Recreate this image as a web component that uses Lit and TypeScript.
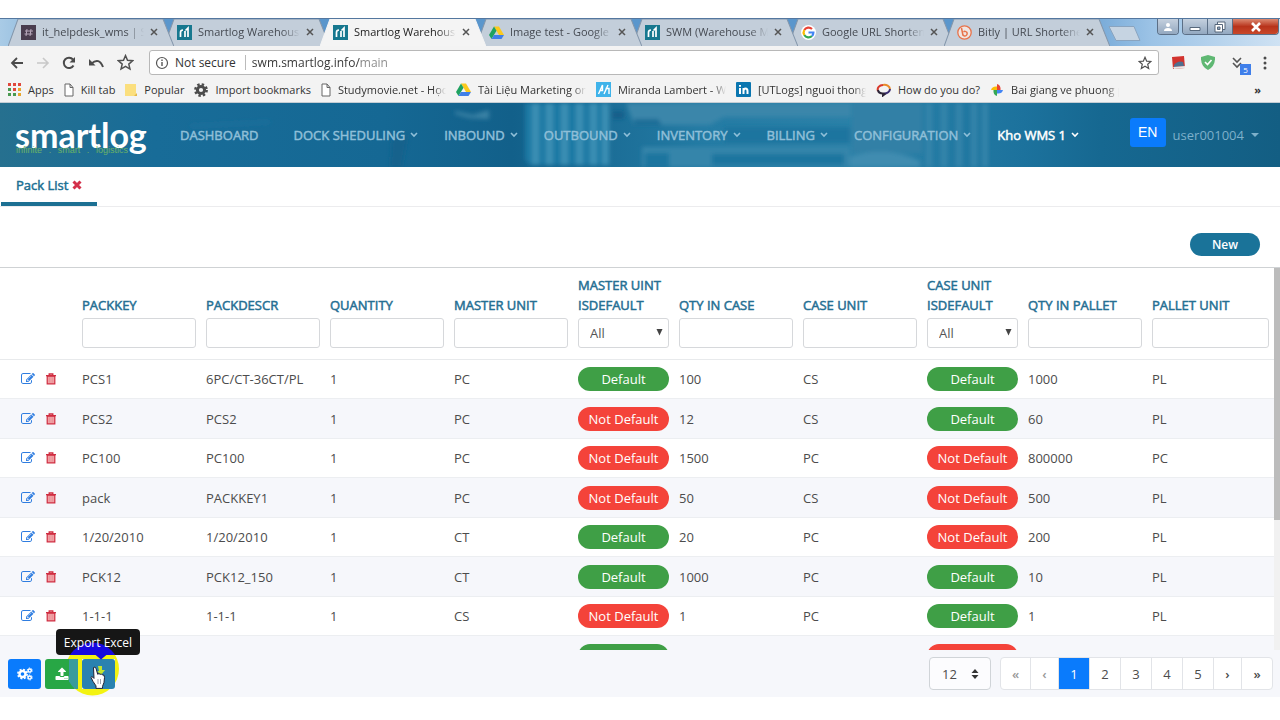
import { LitElement, html, css, svg } from "lit";
import { customElement } from "lit/decorators.js";
import { classMap } from "lit/directives/class-map.js";

const smartlogIcon = html`<svg viewBox="0 0 15 15" width="15" height="15"><rect width="15" height="15" fill="#17788f" /><path d="M3.500 12V7.500Q3.500 5 6 5M8 12V6M11 12V3L8.500 5.500M8 12V9" fill="none" stroke="#fff" stroke-width="1.700" /></svg>`;
const driveIcon = html`<svg viewBox="0 0 15 15" width="15" height="15"><path d="M5 1.500h5l5 8.500h-5z" fill="#fbc91c" /><path d="M5 1.500L0 10l2.500 4L7.500 5.700z" fill="#1fa260" /><path d="M5 10h10l-2.500 4h-10z" fill="#3f7fe8" /></svg>`;
const fileIcon = html`<svg viewBox="0 0 10 14" width="10" height="14"><path d="M1 1h5l3 3.500V13H1zM6 1v3.500h3" fill="#fff" stroke="#666" /></svg>`;
const hashIcon = html`<svg viewBox="0 0 15 15" width="15" height="15"><rect width="15" height="15" fill="#4a3d4f" /><path d="M6 4L5 11M10 4L9 11M4 6h8M3.500 9h8" stroke="#b9a9bd" fill="none" /></svg>`;
const googleIcon = html`<svg viewBox="0 0 15 15" width="15" height="15"><circle cx="7.500" cy="7.500" r="7.500" fill="#fff" /><g fill="none" stroke-width="2.200"><path d="M11 4A5 5 0 0 0 3.300 5" stroke="#e94335" /><path d="M3.300 5a5 5 0 0 0 0 5" stroke="#fbbc05" /><path d="M3.300 10A5 5 0 0 0 11 11" stroke="#34a853" /><path d="M11 11a5 5 0 0 0 1.400-3.500H7.500" stroke="#4285f4" /></g></svg>`;
const bitlyIcon = html`<svg viewBox="0 0 15 15" width="15" height="15"><circle cx="7.500" cy="7.500" r="6.700" fill="#f0e6e2" stroke="#e8734a" stroke-width="1.300" /><path d="M4.500 3L6 10.500M6 10a2.300 2.300 0 1 0 .5-3.200" fill="none" stroke="#e8734a" stroke-width="1.500" /></svg>`;

const browserTabs = [
  { icon: hashIcon, title: "it_helpdesk_wms | Slack" },
  { icon: smartlogIcon, title: "Smartlog Warehouse" },
  { icon: smartlogIcon, title: "Smartlog Warehouse", active: true },
  { icon: driveIcon, title: "Image test - Google Drive" },
  { icon: smartlogIcon, title: "SWM (Warehouse Man" },
  { icon: googleIcon, title: "Google URL Shortener" },
  { icon: bitlyIcon, title: "Bitly | URL Shortener" },
];

const appsIcon = html`<svg viewBox="0 0 13 13" width="13" height="13">${[0, 1, 2].map((r) => [0, 1, 2].map((c) => svg`<rect x=${c * 5} y=${r * 5} width="3" height="3" fill=${["#e0483c", "#4a9a50", "#e8a52c"][r === 0 ? 0 : r === 1 ? (c === 0 ? 1 : c === 1 ? 0 : 2) : c === 2 ? 2 : 1]} />`))}</svg>`;
const folderIcon = html`<svg viewBox="0 0 12 14" width="12" height="14"><path d="M0 1h11v12H0z" fill="#fbdf7e" /><path d="M9 13l3-3v3z" fill="#e3b84a" /></svg>`;
const gearIcon = html`<svg viewBox="0 0 14 14" width="14" height="14"><circle cx="7" cy="7" r="3.600" fill="none" stroke="#4c4c4c" stroke-width="3" /><circle cx="7" cy="7" r="5.700" fill="none" stroke="#4c4c4c" stroke-width="2.400" stroke-dasharray="2.400 2.077" /></svg>`;
const azIcon = html`<svg viewBox="0 0 15 15" width="15" height="15"><rect width="15" height="15" fill="#3fb3ea" /><path d="M2.500 12L6.500 3v5.500H4M12 3L8 12M9.500 6.500h3.500v5.500" fill="none" stroke="#fff" stroke-width="1.400" /></svg>`;
const inIcon = html`<svg viewBox="0 0 15 15" width="15" height="15"><rect width="15" height="15" rx="1" fill="#0a76b0" /><path d="M4 6v6M4 3v1.800M7.500 12V6M7.500 9q0-2.500 2-2.500T11.500 9v3" fill="none" stroke="#fff" stroke-width="2" /></svg>`;
const bubbleIcon = html`<svg viewBox="0 0 15 14" width="15" height="14" fill="none" stroke-width="2"><path d="M2 8a5.500 4.500 0 0 1 5-6" stroke="#d93a2c" /><path d="M7 2a5.500 4.500 0 0 1 7 4" stroke="#e88a2a" /><path d="M14 6a6 4.500 0 0 1-6 4.500" stroke="#3b2e70" /><path d="M2 7q.5 3.500 5 3.500v2l2.500-2" stroke="#2c2538" /></svg>`;
const photosIcon = html`<svg viewBox="0 0 14 14" width="14" height="14"><path d="M7 7V1q4 1 3.500 6z" fill="#e94335" /><path d="M7 7h6q-1 4-6 3.500z" fill="#4285f4" /><path d="M7 7v6q-4-1-3.500-6z" fill="#34a853" /><path d="M7 7H1q1-4 6-3.500z" fill="#fbbc05" /></svg>`;

const bookmarks = [
  { icon: appsIcon, label: "Apps" },
  { icon: fileIcon, label: "Kill tab" },
  { icon: folderIcon, label: "Popular" },
  { icon: gearIcon, label: "Import bookmarks" },
  { icon: fileIcon, label: "Studymovie.net - Học", cut: true },
  { icon: driveIcon, label: "Tài Liệu Marketing onli", cut: true },
  { icon: azIcon, label: "Miranda Lambert - We", cut: true },
  { icon: inIcon, label: "[UTLogs] nguoi thong", cut: true },
  { icon: bubbleIcon, label: "How do you do?" },
  { icon: photosIcon, label: "Bai giang ve phuong p", cut: true },
];

const menu = ["DOCK SHEDULING", "INBOUND", "OUTBOUND", "INVENTORY", "BILLING", "CONFIGURATION"];

const columns = [
  { label: "PACKKEY" },
  { label: "PACKDESCR" },
  { label: "QUANTITY" },
  { label: "MASTER UNIT" },
  { label: "MASTER UINT ISDEFAULT", kind: "flag" },
  { label: "QTY IN CASE" },
  { label: "CASE UNIT" },
  { label: "CASE UNIT ISDEFAULT", kind: "flag" },
  { label: "QTY IN PALLET" },
  { label: "PALLET UNIT", kind: "last" },
];

const rows: (string | boolean)[][] = [
  ["PCS1", "6PC/CT-36CT/PL", "1", "PC", true, "100", "CS", true, "1000", "PL"],
  ["PCS2", "PCS2", "1", "PC", false, "12", "CS", true, "60", "PL"],
  ["PC100", "PC100", "1", "PC", false, "1500", "PC", false, "800000", "PC"],
  ["pack", "PACKKEY1", "1", "PC", false, "50", "CS", false, "500", "PL"],
  ["1/20/2010", "1/20/2010", "1", "CT", true, "20", "PC", false, "200", "PL"],
  ["PCK12", "PCK12_150", "1", "CT", true, "1000", "PC", true, "10", "PL"],
  ["1-1-1", "1-1-1", "1", "CS", false, "1", "PC", true, "1", "PL"],
  ["", "", "", "", true, "", "", false, "", ""],
];

const editIcon = html`<svg viewBox="0 0 1792 1792" width="14" height="14" fill="#2f7de0"><path d="M888 1184l116-116-152-152-116 116v56h96v96h56zm440-720q-16-16-33 1l-350 350q-17 17-1 33t33-1l350-350q17-17 1-33zm80 594v190q0 119-84.500 203.500t-203.500 84.500h-832q-119 0-203.500-84.500t-84.500-203.500v-832q0-119 84.500-203.500t203.500-84.500h832q63 0 117 25 15 7 18 23 3 17-9 29l-49 49q-14 14-32 8-23-6-45-6h-832q-66 0-113 47t-47 113v832q0 66 47 113t113 47h832q66 0 113-47t47-113v-126q0-13 9-22l64-64q15-15 35-7t20 29zm-96-738l288 288-672 672h-288v-288zm444 132l-92 92-288-288 92-92q28-28 68-28t68 28l152 152q28 28 28 68t-28 68z" /></svg>`;
const trashIcon = html`<svg viewBox="0 0 12 12" width="12" height="12"><path d="M2.200 3.200h7.600v7.600H2.200z" fill="#f0a0a4" stroke="#cf2d40" stroke-width="1.200" /><path d="M4.600 4.500v5M7.400 4.500v5" stroke="#e58c92" stroke-width=".6" /><path d="M1 2.700h10M4.200 2.500V1h3.600v1.500" fill="none" stroke="#cf2d40" stroke-width="1.300" /></svg>`;
const caret = html`<svg viewBox="0 0 8 6" width="8" height="6"><path d="M1 1l3 3 3-3" fill="none" stroke="currentColor" stroke-width="1.600" /></svg>`;
const star = (size: number) => html`<svg viewBox="0 0 16 16" width=${size} height=${size}><path d="M8 1.500l1.900 4.400 4.800.4-3.600 3.200 1.100 4.700L8 11.700l-4.200 2.500 1.100-4.700L1.300 6.300l4.800-.4z" fill="none" stroke="#505050" stroke-width="1.400" /></svg>`;

@customElement("browser-chrome")
export class BrowserChrome extends LitElement {
  static styles = css`
    :host { display: block; font: 11px/16px "Open Sans", "Noto Sans", sans-serif; color: #333; }
    svg { display: block; flex: none; }
    button { border: 0; padding: 0; margin: 0; background: none; font: inherit; color: inherit; }
    .strip { display: flex; height: 27px; padding-left: 8px; align-items: stretch; border-top: 1px solid #54779f;
      background: linear-gradient(90deg, #a9cbe6 0, #5a96cc 120px, #5a96cc 82%, #9cc3e6 90%, #cfe2f3 100%); }
    .tab { position: relative; flex: none; box-sizing: border-box; width: 166px; margin-right: -10px; padding: 0 16px 1px 13px; display: flex; align-items: center; gap: 6px; z-index: 1; }
    .tab:nth-child(1) { z-index: 4; }
    .tab:nth-child(2) { z-index: 3; }
    .tab:nth-child(4) { z-index: 3; }
    .tab:nth-child(5) { z-index: 2; }
    .tab.active { z-index: 6; }
    .shape { position: absolute; left: 0; top: 0; width: 100%; height: 100%; z-index: -1; }
    .shape path { fill: #c3ceda; stroke: #8396ab; }
    .active .shape path { fill: #f4f4f4; stroke: #f4f4f4; }
    .title { flex: 1; overflow: hidden; white-space: nowrap; text-align: left; color: #454a52; mask-image: linear-gradient(90deg, #000 82%, transparent 100%); }
    .active .title { color: #222; }
    .newtab { margin: 7px 0 0 8px; height: 15px; }
    .window { margin-left: auto; display: flex; gap: 3px; height: 16px; color: #fff; padding-right: 1px; }
    .group { display: flex; border: 1px solid #5c6f86; border-top: 0; border-radius: 0 0 4px 4px; overflow: hidden; }
    .group button { width: 25px; display: grid; place-items: center; background: linear-gradient(#c4d0de, #93a8c0); border-right: 1px solid #5c6f86; }
    .group button:last-child { border-right: 0; }
    .group.user button { width: 20px; }
    .group button.close { width: 45px; background: linear-gradient(#dc8a72, #b8331b 50%, #c9482a); }
    .tools { display: flex; align-items: center; height: 33px; padding: 0 13px 0 10px; background: #f3f3f3; gap: 12px; }
    .box { flex: 1; min-width: 0; display: flex; align-items: center; gap: 6px; height: 23px; border: 1px solid #b8b8b8; border-radius: 3px; background: #fff; padding: 0 6px 0 5px; margin-left: 3px; font-size: 12px; }
    .sep { width: 1px; height: 15px; background: #bbb; margin-left: 3px; }
    .url { flex: 1; border: 0; outline: 0; padding: 0; font: inherit; background: linear-gradient(90deg, #333 109px, #888 109px); background-clip: text; color: transparent; }
    .ext { display: flex; align-items: center; gap: 15px; }
    .down { position: relative; }
    .badge { position: absolute; left: 10px; top: 7px; width: 11px; height: 11px; background: #3f7fea; color: #fff; font-size: 8px; line-height: 11px; text-align: center; }
    .marks { display: flex; align-items: center; height: 24px; background: #f3f3f3; padding: 0 19px 2px 8px; gap: 10px; border-bottom: 1px solid #c4cdd4; box-sizing: border-box; }
    .mark { display: flex; align-items: center; gap: 7px; color: #333; text-decoration: none; white-space: nowrap; }
    .cut { width: 108px; overflow: hidden; mask-image: linear-gradient(90deg, #000 88%, transparent 100%); }
    .more { margin-left: auto; font-weight: 700; }
  `;

  render() {
    return html`
      <div class="strip">
        ${browserTabs.map(
          (t) => html`<button class=${classMap({ tab: true, active: !!t.active })}>
            <svg class="shape" viewBox="0 0 166 26" preserveAspectRatio="none"><path d="M0 26.500L10 0H155L166 26.500z" /></svg>
            ${t.icon}<span class="title">${t.title}</span>
            <svg viewBox="0 0 8 8" width="8" height="8"><path d="M1 1l6 6M7 1L1 7" stroke="#555" stroke-width="1.500" /></svg>
          </button>`
        )}
        <button class="newtab" aria-label="New tab"><svg viewBox="0 0 33 15" width="33" height="15"><path d="M1 .5h25l6 14H8z" fill="#c6d4e2" stroke="#8aa4bf" /></svg></button>
        <div class="window">
          <div class="group user"><button aria-label="Profile"><svg viewBox="0 0 10 10" width="10" height="10"><circle cx="5" cy="3" r="2" fill="#fff" /><path d="M1 9q0-3 4-3t4 3z" fill="#fff" /></svg></button></div>
          <div class="group">
            <button aria-label="Minimize"><svg viewBox="0 0 12 10" width="12" height="10"><path d="M1 5.500h10v3H1z" fill="#fff" stroke="#57687c" /></svg></button>
            <button aria-label="Restore"><svg viewBox="0 0 12 12" width="12" height="12"><path d="M3.500 1h7.500v7.500H3.500z" fill="#fff" stroke="#56667a" /><path d="M1 3.500h7.500V11H1z" fill="#fff" stroke="#56667a" /><path d="M3.500 6h2.500v2.500H3.500z" fill="#8ea3bb" stroke="#56667a" /></svg></button>
            <button class="close" aria-label="Close"><svg viewBox="0 0 12 10" width="12" height="10"><path d="M2 1l8 8M10 1L2 9" stroke="#fff" stroke-width="2.600" /></svg></button>
          </div>
        </div>
      </div>
      <div class="tools">
        <button aria-label="Back"><svg viewBox="0 0 14 14" width="14" height="14"><path d="M13 7H2M7 2L2 7l5 5" fill="none" stroke="#4a4a4a" stroke-width="1.800" /></svg></button>
        <button aria-label="Forward"><svg viewBox="0 0 14 14" width="14" height="14"><path d="M1 7h11M7 2l5 5-5 5" fill="none" stroke="#c8c8c8" stroke-width="1.600" /></svg></button>
        <button aria-label="Reload"><svg viewBox="0 0 14 14" width="14" height="14"><path d="M11.500 9.500A5.200 5.200 0 1 1 11 3.500" fill="none" stroke="#4a4a4a" stroke-width="2" /><path d="M13 1v5.500H7.500z" fill="#4a4a4a" /></svg></button>
        <button aria-label="Undo"><svg viewBox="0 0 17 14" width="17" height="14"><path d="M3.500 7.500Q11 1 15 11" fill="none" stroke="#4a4a4a" stroke-width="2" /><path d="M1 3v6.500h6.500z" fill="#4a4a4a" /></svg></button>
        <button aria-label="Bookmark">${star(17)}</button>
        <div class="box">
          <svg viewBox="0 0 14 14" width="14" height="14"><circle cx="7" cy="7" r="5.500" fill="none" stroke="#555" stroke-width="1.200" /><path d="M7 6v4M7 3.600v1.300" stroke="#555" stroke-width="1.400" /></svg>
          <span>Not secure</span><span class="sep"></span>
          <input class="url" aria-label="Address" value="swm.smartlog.info/main" />
          <button aria-label="Star this page">${star(14)}</button>
        </div>
        <div class="ext">
          <svg viewBox="0 0 15 15" width="15" height="15"><path d="M1 2l12-1 1 12-12 1z" fill="#d2332e" /><path d="M3 10q4-5 9-3l1 4-10 1z" fill="#4f6f8f" /><path d="M2 12l12-1v2L3 14z" fill="#e8e8e8" /></svg>
          <svg viewBox="0 0 14 15" width="14" height="15"><path d="M7 0l7 2q.5 9-7 13Q-.5 11 0 2z" fill="#5fb873" /><path d="M4 7l2.500 2.500L10.500 5" fill="none" stroke="#fff" stroke-width="1.600" /></svg>
          <span class="down"><svg viewBox="0 0 18 12" width="18" height="12"><path d="M3 1l4 4 4-4M3 6l4 4 4-4" fill="none" stroke="#555" stroke-width="1.600" /></svg><span class="badge">5</span></span>
          <svg viewBox="0 0 4 14" width="4" height="14" fill="#4a4a4a"><circle cx="2" cy="2" r="1.500" /><circle cx="2" cy="7" r="1.500" /><circle cx="2" cy="12" r="1.500" /></svg>
        </div>
      </div>
      <div class="marks">
        ${bookmarks.map((b) => html`<a class="mark" href="#">${b.icon}<span class=${classMap({ cut: !!b.cut })}>${b.label}</span></a>`)}
        <span class="more">»</span>
      </div>
    `;
  }
}

@customElement("app-root")
export class AppRoot extends LitElement {
  static styles = css`
    :host { display: flex; flex-direction: column; height: 100vh; box-sizing: border-box; padding: 18px 0 23px; background: #fff; font: 13px/20px "Open Sans", "Noto Sans", sans-serif; color: #4c4c4c; overflow: hidden; }
    * { box-sizing: border-box; }
    svg { display: block; flex: none; }
    button { border: 0; padding: 0; margin: 0; background: none; font: inherit; color: inherit; }
    a { color: inherit; text-decoration: none; }
    .menu, .page, th label { font-weight: 400; -webkit-text-stroke: 0.5px currentColor; }
    .nav { position: relative; flex: none; display: flex; align-items: center; height: 64px; padding: 0 21px 0 15px; color: #8fbfd8; background: #146a96; overflow: hidden; }
    .photo { position: absolute; inset: 0; width: 100%; height: 100%; }
    .brand { position: relative; width: 130px; margin-right: 35px; color: #fff; }
    .name { display: block; font: 700 34px/34px Lato, sans-serif; }
    .tag { position: absolute; left: 1px; top: 26px; display: flex; justify-content: space-between; width: 112px; font: 9px/12px "Liberation Sans", sans-serif; color: #6bb268; }
    .menu { position: relative; display: flex; gap: 26px; }
    .menu a { display: flex; align-items: center; gap: 5px; white-space: nowrap; }
    .menu .home { margin-right: 9px; }
    .menu .site { color: #fff; }
    .user { position: relative; margin-left: auto; display: flex; align-items: center; gap: 7px; }
    .lang { width: 36px; height: 29px; margin-bottom: 6px; border-radius: 3px; background: #0a7bfc; color: #fff; font: 14px/20px "Liberation Sans", sans-serif; }
    .account { display: flex; align-items: center; gap: 7px; color: #7db0ca; }
    .pages { flex: none; height: 40px; border-bottom: 1px solid #ececee; padding-left: 1px; display: flex; }
    .page { display: flex; align-items: center; gap: 4px; padding: 0 15px; border-bottom: 4px solid #1c7093; color: #1c7093; }
    .actions { flex: none; height: 60px; display: flex; justify-content: flex-end; align-items: center; padding: 15px 20px 0; }
    .new { width: 70px; height: 23px; margin-bottom: 1px; border-radius: 12px; background: #1a7399; color: #fff; font-size: 12px; font-weight: 600; line-height: 23px; }
    .viewport { flex: 1; min-height: 0; display: flex; overflow: hidden; border-top: 1px solid #cfd2d4; }
    .scroll { flex: none; width: 6px; background: #f1f1f1; }
    .thumb { height: 66%; background: #bcbcbc; }
    .sheet { flex: 1; min-width: 0; overflow: hidden; }
    table { width: 100%; table-layout: fixed; border-collapse: separate; border-spacing: 0; }
    .tools-col { width: 77px; }
    .flag { width: 101px; }
    .last { width: 127px; }
    th { height: 92px; padding: 0 5px 11px; vertical-align: bottom; text-align: left; color: #256f93; border-bottom: 1px solid #e8eaec; }
    th label { display: block; }
    .field { display: block; width: 100%; height: 30px; margin-top: 3px; border: 1px solid #d6d8db; border-radius: 3px; background: #fff; font: inherit; font-weight: 400; color: #555; padding: 0 11px; }
    .pick { display: block; position: relative; font-weight: 400; }
    select { appearance: none; }
    .pick svg { position: absolute; right: 6px; top: 11px; pointer-events: none; }
    td { height: 39px; padding: 0 5px; border-bottom: 1px solid #eceef1; white-space: nowrap; }
    tbody tr:nth-child(even) td { height: 40px; background: #f6f7fb; }
    .row-tools { display: flex; align-items: center; gap: 10px; padding-left: 16px; }
    .pill { display: block; height: 24px; line-height: 24px; border-radius: 12px; text-align: center; color: #fff; background: #f4433a; }
    .pill.yes { background: #3f9f46; }
    .footer { position: relative; flex: none; display: flex; align-items: center; height: 47px; padding: 0 7px 0 8px; background: #f6f7fb; gap: 4px; }
    .act { width: 33px; height: 30px; border-radius: 3px; display: grid; place-items: center; background: #0a7bfc; }
    .act.up { background: #28a745; }
    .act.down { background: #2a82b0; }
    .anchor { position: relative; }
    .tip { position: absolute; z-index: 2; left: -26px; top: -30px; width: 84px; height: 26px; border-radius: 4px; background: #161616; color: #fff; line-height: 28px; text-align: center; font-size: 12px; white-space: nowrap; }
    .tip span { position: relative; }
    .glow { position: absolute; left: 0; top: 0; }
    .size { position: relative; margin-left: auto; margin-right: 5px; }
    .size select { display: block; width: 62px; height: 33px; border: 1px solid #d0d4d8; border-radius: 4px; background: #fcfcfe; font: inherit; color: #4c4c4c; padding: 0 12px; }
    .size svg { position: absolute; right: 12px; top: 12px; pointer-events: none; }
    .pager { display: flex; height: 33px; border: 1px solid #e2e4e8; border-radius: 4px; overflow: hidden; background: #fff; }
    .pager button { width: 31px; border-right: 1px solid #e2e4e8; }
    .pager .edge { width: 30px; font-weight: 600; }
    .pager button:last-child { border-right: 0; }
    .pager .slim { width: 28px; font-weight: 600; }
    .pager .off { color: #999; }
    .pager .on { background: #0a7bfc; color: #fff; }
  `;

  private filter(c: { label: string; kind?: string }, i: number) {
    return html`<th>
      <label for="f${i}">${c.label}</label>
      ${c.kind === "flag"
        ? html`<span class="pick"><select class="field" id="f${i}"><option>All</option></select><svg viewBox="0 0 7 7" width="7" height="7"><path d="M.5 0h6l-3 6.500z" fill="#444" /></svg></span>`
        : html`<input class="field" id="f${i}" />`}
    </th>`;
  }

  render() {
    return html`
      <browser-chrome></browser-chrome>
      <div class="nav">
        <svg class="photo" viewBox="0 0 1280 64" preserveAspectRatio="none">
          <defs>
            <filter id="soft" x="-5%" y="-20%" width="110%" height="140%"><feGaussianBlur stdDeviation="2" /></filter>
            <linearGradient id="base"><stop offset="0" stop-color="#26708f" /><stop offset=".12" stop-color="#186c98" /><stop offset=".3" stop-color="#156894" /><stop offset=".4" stop-color="#12608a" /><stop offset=".55" stop-color="#247ba4" /><stop offset=".68" stop-color="#2b81a8" /><stop offset=".8" stop-color="#1c729d" /><stop offset=".86" stop-color="#166891" /><stop offset="1" stop-color="#135e83" /></linearGradient>
          </defs>
          <rect width="1280" height="64" fill="url(#base)" />
          <g filter="url(#soft)">
            <path d="M455 8l18 4 16-5v9l-20-1-14-4z" fill="#3a82a5" />
            <path d="M525 0h80v62h-76l-4-6z" fill="#1f79a4" />
            ${[532, 546, 561, 576, 590, 602].map((x) => svg`<rect x=${x} y="0" width="7" height="62" fill="#3b8fb4" />`)}
            <path d="M612 8h12v8h-12z" fill="#155f8a" />
            <path d="M626 0h225v14H724l-14 8h-76z" fill="#3a86aa" />
            <path d="M634 16h24l4 6h-28z" fill="#1c6d97" />
            <path d="M724 24h126v16H724z" fill="#1f759f" />
            <path d="M642 44h208v20H642z" fill="#3585aa" />
            <path d="M645 50h24v14h-24zM712 51h132v11H712z" fill="#1f759f" />
            <path d="M852 0h70v50h-70z" fill="#3080a6" />
            ${[926, 941, 956, 971, 982].map((x) => svg`<rect x=${x} y="0" width="6" height="64" fill="#3484aa" />`)}
            <path d="M850 54q35-12 70 4v6h-70z" fill="#3f8cb0" />
            <path d="M392 36l16-4-6 32h-12z" fill="#17628c" />
            <path d="M190 22l80-4v2l-80 4z" fill="#2173a0" />
          </g>
        </svg>
        <a class="brand" href="#"><span class="name">smartlog</span><span class="tag"><span>infinite</span><span>.</span><span>smart</span><span>.</span><span>logistics</span></span></a>
        <nav class="menu">
          <a class="home" href="#">DASHBOARD</a>
          ${menu.map((m) => html`<a href="#">${m}${caret}</a>`)}
          <a class="site" href="#">Kho WMS 1${caret}</a>
        </nav>
        <div class="user">
          <button class="lang">EN</button>
          <a class="account" href="#">user001004<svg viewBox="0 0 8 5" width="8" height="5"><path d="M0 0h8L4 4z" fill="currentColor" /></svg></a>
        </div>
      </div>
      <div class="pages">
        <a class="page" href="#">Pack List<svg viewBox="0 0 10 10" width="10" height="10"><path d="M1.500 1.500l7 7M8.500 1.500l-7 7" stroke="#d3304a" stroke-width="3" /></svg></a>
      </div>
      <div class="actions"><button class="new">New</button></div>
      <div class="viewport">
        <div class="sheet">
          <table>
            <colgroup>
              <col class="tools-col" />
              ${columns.map((c) => html`<col class=${c.kind ?? ""} />`)}
            </colgroup>
            <thead><tr><th></th>${columns.map((c, i) => this.filter(c, i))}</tr></thead>
            <tbody>
              ${rows.map(
                (r) => html`<tr>
                  <td><div class="row-tools"><button aria-label="Edit">${editIcon}</button><button aria-label="Delete">${trashIcon}</button></div></td>
                  ${r.map((v) => html`<td>${typeof v === "boolean" ? html`<span class=${classMap({ pill: true, yes: v })}>${v ? "Default" : "Not Default"}</span>` : v}</td>`)}
                </tr>`
              )}
            </tbody>
          </table>
        </div>
        <div class="scroll"><div class="thumb"></div></div>
      </div>
      <div class="footer">
        <button class="act" aria-label="Settings">
          <svg viewBox="0 0 16 14" width="16" height="14" fill="none" stroke="#fff"><circle cx="5.500" cy="7" r="3" stroke-width="2.400" /><circle cx="5.500" cy="7" r="4.600" stroke-width="1.600" stroke-dasharray="2 1.613" /><circle cx="12.700" cy="3.500" r="1.600" stroke-width="1.500" /><circle cx="12.700" cy="3.500" r="2.500" stroke-width="1" stroke-dasharray="1.400 1.218" /><circle cx="12.700" cy="10.500" r="1.600" stroke-width="1.500" /><circle cx="12.700" cy="10.500" r="2.500" stroke-width="1" stroke-dasharray="1.400 1.218" /></svg>
        </button>
        <button class="act up" aria-label="Import"><svg viewBox="0 0 1792 1792" width="14" height="14" fill="#fff"><path d="M1344 1472q0-26-19-45t-45-19-45 19-19 45 19 45 45 19 45-19 19-45zm256 0q0-26-19-45t-45-19-45 19-19 45 19 45 45 19 45-19 19-45zm128-224v320q0 40-28 68t-68 28h-1472q-40 0-68-28t-28-68v-320q0-40 28-68t68-28h427q21 56 70.500 92t110.500 36h256q61 0 110.500-36t70.500-92h427q40 0 68 28t28 68zm-325-648q-17 40-59 40h-256v448q0 26-19 45t-45 19h-256q-26 0-45-19t-19-45v-448h-256q-42 0-59-40-17-39 14-69l448-448q18-19 45-19t45 19l448 448q31 30 14 69z" /></svg></button>
        <div class="anchor">
          <button class="act down" aria-label="Export Excel"></button>
          <div class="tip">
            <svg class="glow" viewBox="56 629 84 71" width="84" height="71">
              <defs>
                <clipPath id="out"><path clip-rule="evenodd" d="M56 655h84v45H56zM56 659h22v29H56zM82 659h33v30H82z" /></clipPath>
                <clipPath id="green"><path d="M69 659h9v30h-9z" /></clipPath>
                <clipPath id="tipbox"><path d="M56 629h84v26H56z" /></clipPath>
              </defs>
              <circle cx="92.500" cy="669" r="26.500" fill="#f3f312" clip-path="url(#out)" />
              <circle cx="92.500" cy="669" r="26.500" fill="#3a9b9d" clip-path="url(#green)" />
              <circle cx="92.500" cy="669" r="26.500" fill="#1708df" clip-path="url(#tipbox)" />
              <path d="M95 654.500h12l-6 5z" fill="#1708df" />
              <path d="M98 666h4v4h3l-4 5-4-4h2z" fill="#c3e62d" />
              <path d="M93.500 667.500q1.500-1 2.500.8l1.700 6 1.300-.8 1 .8 1.500-.3 1 1 1.500.2.500 2.200-.5 5-1.500 4v2H96v-2.500l-3-4.500-2-4q.3-1.500 2.400.2l.6.800z" fill="#fff" stroke="#223" stroke-width="1" />
              <path d="M98 679v5M100.500 679v5" stroke="#889" stroke-width=".8" />
            </svg>
            <span>Export Excel</span>
          </div>
        </div>
        <div class="size">
          <select aria-label="Rows per page"><option>12</option></select>
          <svg viewBox="0 0 8 10" width="8" height="10"><path d="M.5 4L4 0l3.500 4zM.5 6L4 10l3.500-4z" fill="#333" /></svg>
        </div>
        <div class="pager">
          <button class="off edge">«</button><button class="off slim">‹</button><button class="on">1</button><button>2</button><button>3</button><button>4</button><button>5</button><button class="slim">›</button><button class="edge">»</button>
        </div>
      </div>
    `;
  }
}
